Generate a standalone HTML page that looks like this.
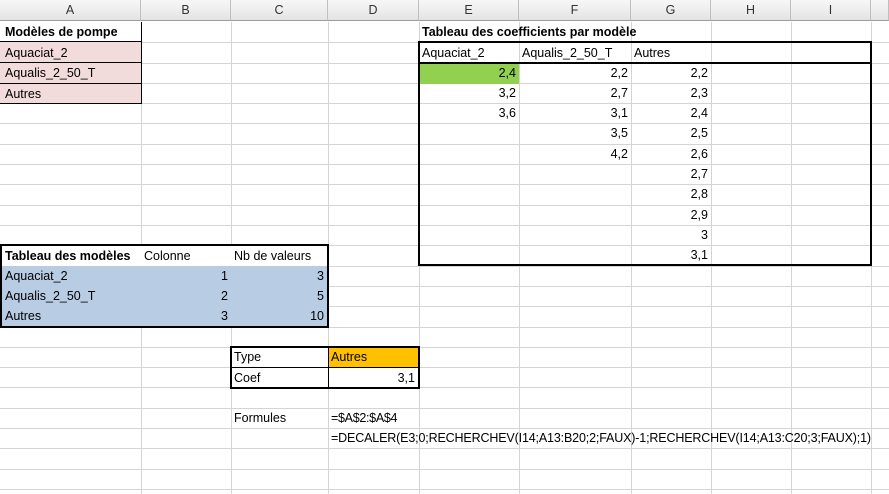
<!DOCTYPE html>
<html><head><meta charset="utf-8"><style>
body{margin:0;width:889px;height:494px;overflow:hidden;background:#fff;font-family:"Liberation Sans",sans-serif;font-size:12.5px;color:#000;position:relative}
.hdr{position:absolute;top:0;height:21px;background:linear-gradient(#f7f7f7,#e4e4e4);border-right:1px solid #bfbfbf;border-bottom:1px solid #9c9c9c;box-sizing:border-box;text-align:center;line-height:21px;color:#333;font-size:12.5px}
.vl{position:absolute;top:22px;bottom:0;width:1px;background:#d4d4d4}
.hl{position:absolute;left:0;right:0;height:1px;background:#d4d4d4}
.c{position:absolute;height:20px;line-height:21px;box-sizing:border-box;padding:0 3px;white-space:nowrap}
.r{text-align:right}
.b{font-weight:bold}
.box{position:absolute;border:2px solid #000;box-sizing:border-box}
</style></head><body>
<div class="hdr" style="left:0;width:141px">A</div>
<div class="hdr" style="left:141px;width:90px">B</div>
<div class="hdr" style="left:231px;width:97px">C</div>
<div class="hdr" style="left:328px;width:91px">D</div>
<div class="hdr" style="left:419px;width:100px">E</div>
<div class="hdr" style="left:519px;width:112px">F</div>
<div class="hdr" style="left:631px;width:80px">G</div>
<div class="hdr" style="left:711px;width:80px">H</div>
<div class="hdr" style="left:791px;width:80px">I</div>
<div class="hdr" style="left:871px;width:18px"></div>

<div class="vl" style="left:141px"></div><div class="vl" style="left:231px"></div><div class="vl" style="left:328px"></div><div class="vl" style="left:419px"></div><div class="vl" style="left:519px"></div><div class="vl" style="left:631px"></div><div class="vl" style="left:711px"></div><div class="vl" style="left:791px"></div><div class="vl" style="left:871px"></div>
<div class="hl" style="top:42px"></div><div class="hl" style="top:63px"></div><div class="hl" style="top:83px"></div><div class="hl" style="top:103px"></div><div class="hl" style="top:123px"></div><div class="hl" style="top:144px"></div><div class="hl" style="top:164px"></div><div class="hl" style="top:184px"></div><div class="hl" style="top:205px"></div><div class="hl" style="top:225px"></div><div class="hl" style="top:245px"></div><div class="hl" style="top:266px"></div><div class="hl" style="top:286px"></div><div class="hl" style="top:306px"></div><div class="hl" style="top:327px"></div><div class="hl" style="top:347px"></div><div class="hl" style="top:367px"></div><div class="hl" style="top:387px"></div><div class="hl" style="top:408px"></div><div class="hl" style="top:428px"></div><div class="hl" style="top:448px"></div><div class="hl" style="top:469px"></div><div class="hl" style="top:489px"></div>

<div style="position:absolute;left:0;top:42px;width:141px;height:62px;background:#f2dcdb"></div>
<div style="position:absolute;left:0;top:266px;width:328px;height:61px;background:#b8cce4"></div>
<div style="position:absolute;left:419px;top:63px;width:100px;height:21px;background:#92d050"></div>
<div style="position:absolute;left:328px;top:347px;width:91px;height:20px;background:#ffc000"></div>
<div style="position:absolute;left:0;top:246px;width:328px;height:20px;background:#fff"></div>

<div style="position:absolute;left:0;top:41px;width:142px;height:1px;background:#000"></div>
<div style="position:absolute;left:0;top:62px;width:142px;height:1px;background:#000"></div>
<div style="position:absolute;left:0;top:83px;width:142px;height:1px;background:#000"></div>
<div style="position:absolute;left:0;top:103px;width:142px;height:1px;background:#000"></div>
<div style="position:absolute;left:141px;top:22px;width:1px;height:82px;background:#000"></div>

<div class="box" style="left:418px;top:41px;width:454px;height:225px"></div>
<div style="position:absolute;left:418px;top:62px;width:454px;height:2px;background:#000"></div>
<div class="box" style="left:0;top:244px;width:329px;height:84px"></div>
<div class="box" style="left:230px;top:346px;width:190px;height:43px"></div>
<div style="position:absolute;left:230px;top:367px;width:190px;height:1px;background:#000"></div>
<div style="position:absolute;left:328px;top:346px;width:1px;height:42px;background:#000"></div>

<div class="c b" style="left:2px;top:22px">Modèles de pompe</div>
<div class="c" style="left:2px;top:43px">Aquaciat_2</div>
<div class="c" style="left:2px;top:63px">Aqualis_2_50_T</div>
<div class="c" style="left:2px;top:84px">Autres</div>

<div class="c b" style="left:419px;top:22px">Tableau des coefficients par modèle</div>
<div class="c" style="left:419px;top:43px">Aquaciat_2</div>
<div class="c" style="left:519px;top:43px">Aqualis_2_50_T</div>
<div class="c" style="left:631px;top:43px">Autres</div>

<div class="c r" style="left:419px;width:100px;top:63px">2,4</div>
<div class="c r" style="left:419px;width:100px;top:83px">3,2</div>
<div class="c r" style="left:419px;width:100px;top:103px">3,6</div>
<div class="c r" style="left:519px;width:112px;top:63px">2,2</div>
<div class="c r" style="left:519px;width:112px;top:83px">2,7</div>
<div class="c r" style="left:519px;width:112px;top:103px">3,1</div>
<div class="c r" style="left:519px;width:112px;top:123px">3,5</div>
<div class="c r" style="left:519px;width:112px;top:144px">4,2</div>
<div class="c r" style="left:631px;width:80px;top:63px">2,2</div>
<div class="c r" style="left:631px;width:80px;top:83px">2,3</div>
<div class="c r" style="left:631px;width:80px;top:103px">2,4</div>
<div class="c r" style="left:631px;width:80px;top:123px">2,5</div>
<div class="c r" style="left:631px;width:80px;top:144px">2,6</div>
<div class="c r" style="left:631px;width:80px;top:164px">2,7</div>
<div class="c r" style="left:631px;width:80px;top:184px">2,8</div>
<div class="c r" style="left:631px;width:80px;top:205px">2,9</div>
<div class="c r" style="left:631px;width:80px;top:225px">3</div>
<div class="c r" style="left:631px;width:80px;top:245px">3,1</div>

<div class="c b" style="left:2px;top:246px">Tableau des modèles</div>
<div class="c" style="left:141px;top:246px">Colonne</div>
<div class="c" style="left:231px;top:246px">Nb de valeurs</div>
<div class="c" style="left:2px;top:266px">Aquaciat_2</div>
<div class="c" style="left:2px;top:286px">Aqualis_2_50_T</div>
<div class="c" style="left:2px;top:306px">Autres</div>
<div class="c r" style="left:141px;width:90px;top:266px">1</div>
<div class="c r" style="left:141px;width:90px;top:286px">2</div>
<div class="c r" style="left:141px;width:90px;top:306px">3</div>
<div class="c r" style="left:231px;width:96px;top:266px">3</div>
<div class="c r" style="left:231px;width:96px;top:286px">5</div>
<div class="c r" style="left:231px;width:96px;top:306px">10</div>

<div class="c" style="left:231px;top:347px">Type</div>
<div class="c" style="left:328px;top:347px">Autres</div>
<div class="c" style="left:231px;top:368px">Coef</div>
<div class="c r" style="left:328px;width:90px;top:368px">3,1</div>

<div class="c" style="left:231px;top:408px">Formules</div>
<div class="c" style="left:328px;top:408px;letter-spacing:-0.3px">=$A$2:$A$4</div>
<div class="c" style="left:328px;top:428px;font-size:12.5px;letter-spacing:-0.15px">=DECALER(E3;0;RECHERCHEV(I14;A13:B20;2;FAUX)-1;RECHERCHEV(I14;A13:C20;3;FAUX);1)</div>
</body></html>
